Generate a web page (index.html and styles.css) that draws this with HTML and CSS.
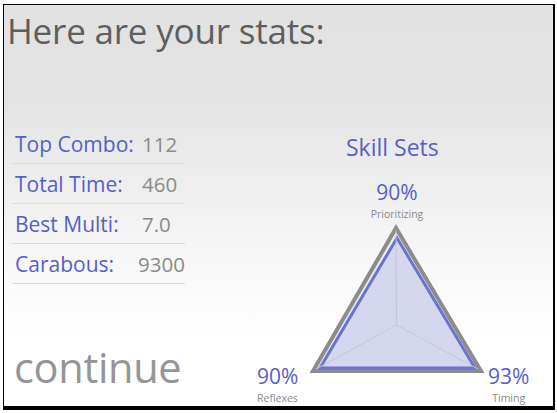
FILE: index.html
```html
<!DOCTYPE html>
<html lang="en">

<head>
    <meta charset="UTF-8">
    <meta name="viewport" content="width=device-width, initial-scale=1.0">
    <title>Your Stats</title>

    <link rel="stylesheet" href="styles.css">
</head>

<body>
    <div class="frame">
        <h1 class="title">Here are your stats:</h1>
        <div class="main">
            <div class="left">
                <ul class="stats">
                    <li class="stat-row"><span class="stat-label">Top Combo:</span><span class="stat-value">112</span></li>
                    <li class="stat-row"><span class="stat-label">Total Time:</span><span class="stat-value">460</span></li>
                    <li class="stat-row"><span class="stat-label">Best Multi:</span><span class="stat-value">7.0</span></li>
                    <li class="stat-row"><span class="stat-label">Carabous:</span><span class="stat-value">9300</span></li>
                </ul>
                <a class="continue" href="#">continue</a>
            </div>
            <div class="right">
                <h2 class="skills-title">Skill Sets</h2>
                <div class="radar">
                    <svg class="radar-svg" width="295" height="225" viewBox="0 0 295 225">
                        <polygon points="146,48 63,191 231,191" fill="#e9e9ef" stroke="#8c8c8c" stroke-width="4" stroke-linejoin="miter" />
                        <polygon points="147,58 70,188 225,188" fill="#d5d7ee" stroke="#6a72d2" stroke-width="3" />
                        <line x1="146.5" y1="145" x2="146" y2="50" stroke="#c6c6d4" stroke-width="1" />
                        <line x1="146.5" y1="145" x2="66" y2="189" stroke="#c6c6d4" stroke-width="1" />
                        <line x1="146.5" y1="145" x2="228" y2="189" stroke="#c6c6d4" stroke-width="1" />
                    </svg>
                    <div class="axis axis-top"><span class="axis-pct">90%</span><span class="axis-name">Prioritizing</span></div>
                    <div class="axis axis-left"><span class="axis-pct">90%</span><span class="axis-name">Reflexes</span></div>
                    <div class="axis axis-right"><span class="axis-pct">93%</span><span class="axis-name">Timing</span></div>
                </div>
            </div>
        </div>
    </div>
</body>

</html>
```

FILE: styles.css
```css
body {
    margin: 0;
    padding: 0;
    background-color: #fff;
    font-family: "Open Sans", "Noto Sans", sans-serif;
}

.frame {
    box-sizing: border-box;
    width: 552px;
    height: 406px;
    margin: 4px 0 0 3px;
    border-style: solid;
    border-color: #000;
    border-width: 1px 2px 4px 1px;
    background: linear-gradient(#e2e2e2 0%, #e3e3e3 22%, #f6f6f6 60%, #fff 85%);
    display: flex;
    flex-direction: column;
}

.title {
    margin: 0;
    padding: 4px 0 0 3px;
    font-size: 35px;
    font-weight: normal;
    line-height: 44px;
    color: #5e5e5e;
    letter-spacing: -0.2px;
}

.main {
    flex: 1;
    display: flex;
}

.left {
    width: 236px;
    display: flex;
    flex-direction: column;
    justify-content: space-between;
    padding: 71px 0 17px 8px;
}

.stats {
    list-style: none;
    margin: 0;
    padding: 0;
    width: 173px;
}

.stat-row {
    display: flex;
    align-items: center;
    height: 39px;
    border-bottom: 1px solid #dcdcdc;
    font-size: 20.5px;
}

.stat-label {
    width: 127px;
    padding-left: 3px;
    color: #5560c8;
    font-size: 21px;
}

.stat-value {
    color: #8a8a8a;
}

.continue {
    font-size: 41.5px;
    line-height: 44px;
    color: #959595;
    text-decoration: none;
    padding-left: 2px;
    letter-spacing: -0.3px;
}

.right {
    flex: 1;
    display: flex;
    flex-direction: column;
    padding-top: 79px;
}

.skills-title {
    margin: 0 0 18px 0;
    padding-left: 98px;
    font-size: 23px;
    font-weight: normal;
    line-height: 30px;
    color: #5560c8;
}

.radar {
    position: relative;
    width: 295px;
    height: 225px;
    margin-left: 2px;
}

.radar-svg {
    display: block;
}

.axis {
    position: absolute;
    display: flex;
    flex-direction: column;
    line-height: 1;
}

.axis-pct {
    font-size: 21px;
    color: #5560c8;
}

.axis-name {
    font-size: 10.5px;
    color: #8a8a8a;
    margin-top: 6px;
}

.axis-top {
    left: 107px;
    top: 2px;
    width: 80px;
    align-items: center;
}

.axis-left {
    left: 7px;
    top: 186px;
}

.axis-right {
    left: 238px;
    top: 186px;
    align-items: center;
}
```
